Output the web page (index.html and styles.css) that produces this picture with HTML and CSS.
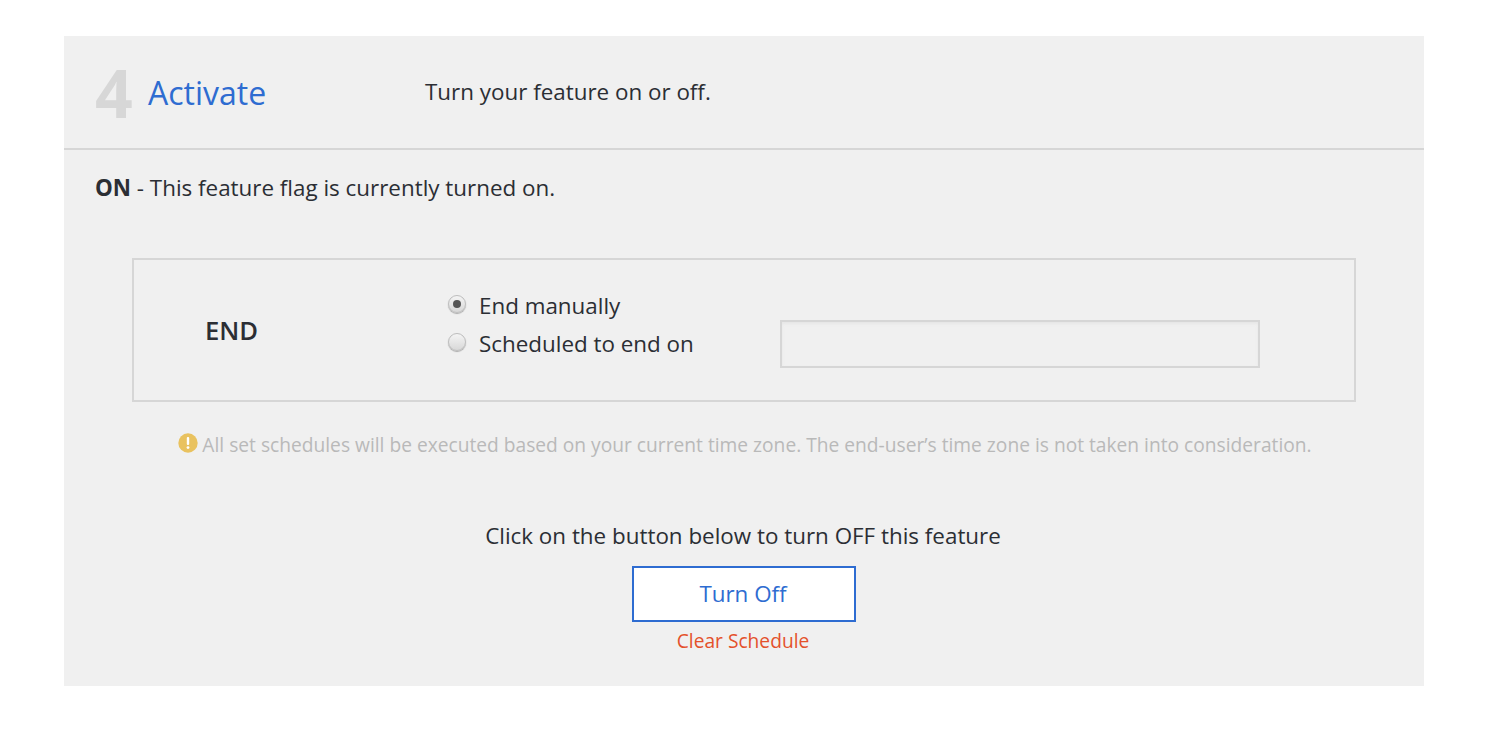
FILE: index.html
```html
<!DOCTYPE html>
<html lang="en">
<head>
<meta charset="utf-8">
<title>Activate</title>
<link rel="stylesheet" href="styles.css">
</head>
<body>
<section class="panel">
  <header class="head">
    <span class="num">4</span>
    <h2 class="title">Activate</h2>
    <p class="desc">Turn your feature on or off.</p>
  </header>
  <p class="status"><b>ON</b> - This feature flag is currently turned on.</p>
  <div class="box">
    <div class="end">END</div>
    <div class="opts">
      <label class="opt"><span class="radio on"></span>End manually</label>
      <label class="opt"><span class="radio"></span>Scheduled to end on</label>
    </div>
    <div class="date"></div>
  </div>
  <p class="note"><svg class="warn" width="20" height="20" viewBox="0 0 20 20"><circle cx="10" cy="10" r="9.7" fill="#e9c25f"/><rect x="8.8" y="4" width="2.4" height="8" rx="1" fill="#fff"/><circle cx="10" cy="14.6" r="1.4" fill="#fff"/></svg>All set schedules will be executed based on your current time zone. The end-user’s time zone is not taken into consideration.</p>
  <p class="cta">Click on the button below to turn OFF this feature</p>
  <button class="btn">Turn Off</button>
  <a class="clear">Clear Schedule</a>
</section>
</body>
</html>
```
FILE: styles.css
```css
* { box-sizing: border-box; }
html, body { margin: 0; background: #fff; }
body { padding: 36px 66px 0 64px; height: 730px; overflow: hidden; font-family: "Open Sans", sans-serif; color: #2b2e34; }
.panel { background: #f0f0f0; height: 650px; display: flex; flex-direction: column; }
.head { height: 114px; border-bottom: 2px solid #d6d6d6; display: flex; align-items: center; padding-left: 31px; flex: none; }
.num { font-size: 66px; font-weight: 700; color: #d7d7d7; width: 53px; line-height: 1; }
.title { margin: 2px 0 0; font-size: 32px; font-weight: 400; color: #2e6cd1; width: 277px; line-height: 1.2; }
.desc { margin: 0; font-size: 22.4px; line-height: 30px; }
.status { margin: 0; padding: 23px 0 0 31px; font-size: 22.4px; line-height: 30px; }
.status b { font-weight: 700; }
.box { margin: 55px 68px 0; height: 144px; border: 2px solid #d6d6d6; display: flex; align-items: center; flex: none; }
.end { width: 314px; padding-left: 71px; font-size: 25.6px; font-weight: 600; line-height: 32px; margin-top: 1px; }
.opts { width: 332px; display: flex; flex-direction: column; gap: 8px; margin-top: -11px; }
.opt { display: flex; align-items: center; font-size: 22.4px; line-height: 30px; }
.radio { width: 18px; height: 18px; border-radius: 50%; margin-right: 13px; background: linear-gradient(#f4f4f4, #d8d8d8); border: 1px solid #bdbdbd; box-shadow: 0 1px 1px #aaa; display: flex; align-items: center; justify-content: center; margin-top: -3px; }
.radio.on::after { content: ""; width: 8px; height: 8px; border-radius: 50%; background: #555; }
.date { width: 480px; height: 48px; border: 2px solid #d6d6d6; box-shadow: inset 0 2px 3px #e6e6e6; margin-top: 28px; }
.note { margin: 28px 0 0; display: flex; justify-content: center; align-items: flex-start; font-size: 19.2px; line-height: 30px; color: #b9b9b9; padding-left: 2px; }
.warn { margin: 3px 4px 0 0; flex: none; }
.cta { margin: 61px 0 0; padding-right: 2px; text-align: center; font-size: 22.4px; line-height: 30px; }
.btn { align-self: center; margin: 15px 0 0; width: 224px; height: 56px; background: #fff; border: 2px solid #2e6cd1; color: #2e6cd1; font: 22.4px/30px "Open Sans", sans-serif; padding: 0 2px 0 0; }
.clear { align-self: center; margin: 4px 2px 0 0; font-size: 19.2px; line-height: 30px; color: #e4512b; }
```
